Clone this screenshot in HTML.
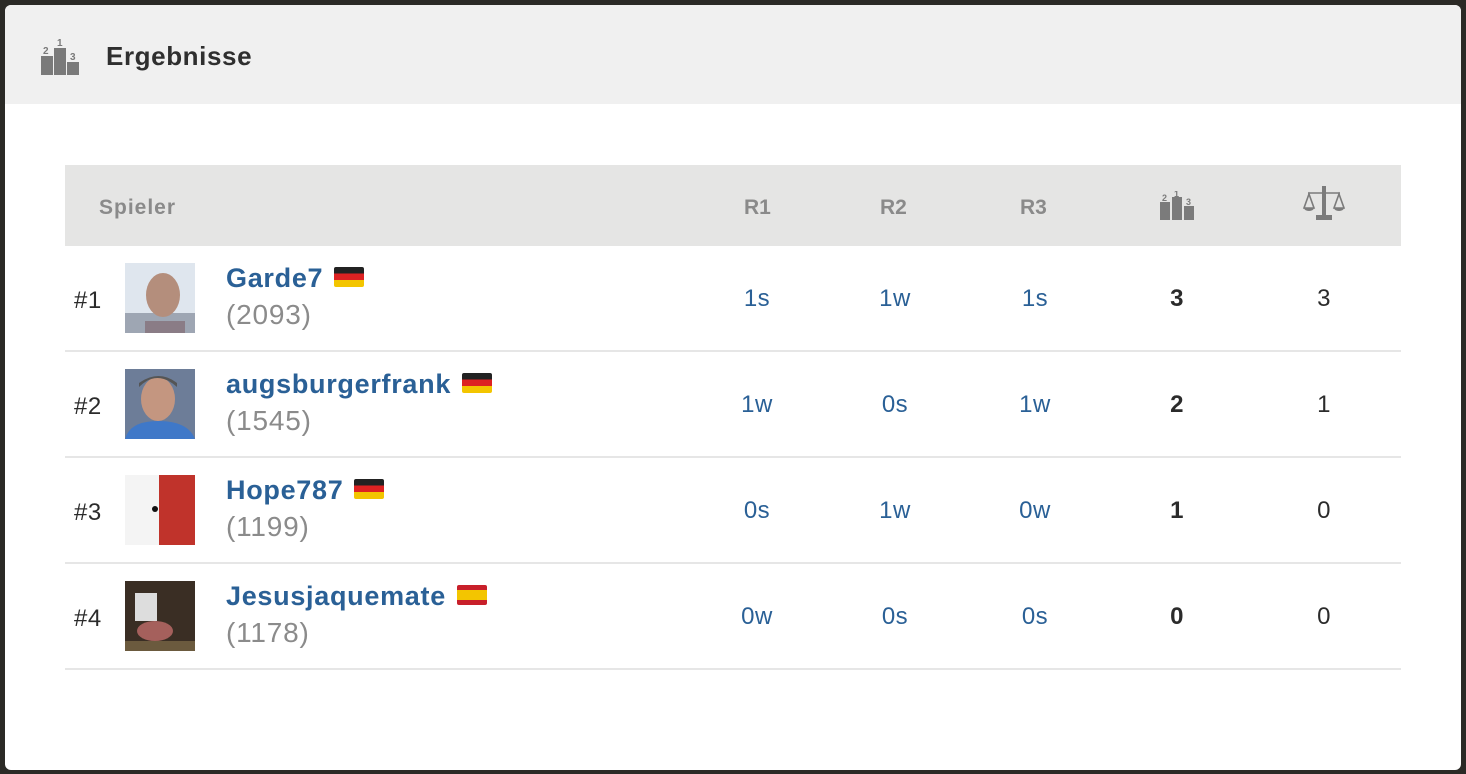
<!DOCTYPE html>
<html><head><meta charset="utf-8"><style>
*{margin:0;padding:0;box-sizing:border-box}
body{width:1466px;height:774px;background:#2b2a26;font-family:"Liberation Sans",sans-serif;overflow:hidden;position:relative}
.card{position:absolute;left:5px;top:5px;width:1456px;height:765px;background:#fff;border-radius:6px;overflow:hidden}
.hdr{height:99px;background:#f0f0f0;position:relative}
.hdr .t{position:absolute;left:101px;top:36px;font-size:26px;color:#2f2f2f;font-weight:bold;letter-spacing:0.6px}
.th{position:absolute;left:60px;top:160px;width:1336px;height:81px;background:#e5e5e4}
.th span{position:absolute;top:31px;font-size:21px;color:#8a8a8a;font-weight:bold}
.row{position:absolute;left:60px;width:1336px;height:106px;border-bottom:2px solid #e6e6e6}
.rk{position:absolute;left:9px;top:41px;font-size:24px;color:#2b2b2b;letter-spacing:0.5px}
.av{position:absolute;left:60px;top:17px;width:70px;height:70px}
.nm{position:absolute;left:161px;top:17px;font-size:27px;font-weight:bold;color:#2a6096;white-space:nowrap;letter-spacing:0.7px}
.fl{display:inline-block;width:30px;height:20px;vertical-align:0px;margin-left:11px;border-radius:2px;overflow:hidden}
.rt{position:absolute;left:161px;top:53px;font-size:28px;color:#8b8b8b;letter-spacing:0.8px}
.c{position:absolute;top:39px;width:100px;margin-left:-50px;text-align:center;font-size:24px;color:#2a6096;letter-spacing:0.5px}
.b{color:#2b2b2b;font-weight:bold}
.n{color:#2b2b2b}
</style></head><body>
<div class="card">
<div class="hdr">
<svg style="position:absolute;left:35px;top:31px" width="40" height="40" viewBox="0 0 40 40"><g fill="#7a7a7a"><rect x="1" y="20" width="12" height="19"/><rect x="14" y="12" width="12" height="27"/><rect x="27" y="26" width="12" height="13"/></g><g fill="#7a7a7a" font-family="Liberation Sans" font-weight="bold" font-size="10"><text x="3" y="18">2</text><text x="17" y="10">1</text><text x="30" y="24">3</text></g></svg>
<div class="t">Ergebnisse</div>
</div>
<div class="th">
<span style="left:34px;letter-spacing:1px">Spieler</span>
<span style="left:679px">R1</span>
<span style="left:815px">R2</span>
<span style="left:955px">R3</span>
<svg style="position:absolute;left:1095px;top:26px" width="34" height="29" viewBox="0 0 34 29"><g fill="#7b7b7b"><rect x="0" y="11" width="10" height="18"/><rect x="12" y="6" width="10" height="23"/><rect x="24" y="15" width="10" height="14"/></g><g fill="#7b7b7b" font-family="Liberation Sans" font-weight="bold" font-size="9"><text x="2" y="10">2</text><text x="14" y="6">1</text><text x="26" y="14">3</text></g></svg>
<svg style="position:absolute;left:1238px;top:21px" width="42" height="36" viewBox="0 0 42 36"><g fill="none" stroke="#7b7b7b" stroke-width="1.6"><path d="M5 7h32"/><path d="M6 8L1 22h10z"/><path d="M36 8l-5 14h10z"/></g><path d="M1 22a5 3 0 0 0 10 0zM31 22a5 3 0 0 0 10 0z" fill="#7b7b7b"/><rect x="19" y="0" width="4" height="30" fill="#7b7b7b"/><rect x="13" y="29" width="16" height="5" fill="#7b7b7b"/></svg>
</div>

<div class="row" style="top:241px">
<div class="rk">#1</div>
<svg class="av" viewBox="0 0 70 70"><rect width="70" height="70" fill="#dfe6ee"/><rect y="50" width="70" height="20" fill="#9ea6b3"/><ellipse cx="38" cy="32" rx="17" ry="22" fill="#b48e7c"/><rect x="20" y="58" width="40" height="12" fill="#8a7c86"/></svg>
<div class="nm">Garde7<span class="fl" style="background:linear-gradient(#222 33%,#dd2222 33%,#dd2222 66%,#f3c500 66%)"></span></div>
<div class="rt">(2093)</div>
<div class="c" style="left:692px">1s</div><div class="c" style="left:830px">1w</div><div class="c" style="left:970px">1s</div>
<div class="c b" style="left:1112px">3</div><div class="c n" style="left:1259px">3</div>
</div>

<div class="row" style="top:347px">
<div class="rk">#2</div>
<svg class="av" viewBox="0 0 70 70"><rect width="70" height="70" fill="#6d7d98"/><ellipse cx="33" cy="30" rx="17" ry="22" fill="#c49680"/><path d="M14 18q18-18 38 0v-4q-18-14-38 0z" fill="#555"/><path d="M0 70q5-18 33-18q30 0 37 18z" fill="#3f78c8"/></svg>
<div class="nm">augsburgerfrank<span class="fl" style="background:linear-gradient(#222 33%,#dd2222 33%,#dd2222 66%,#f3c500 66%)"></span></div>
<div class="rt">(1545)</div>
<div class="c" style="left:692px">1w</div><div class="c" style="left:830px">0s</div><div class="c" style="left:970px">1w</div>
<div class="c b" style="left:1112px">2</div><div class="c n" style="left:1259px">1</div>
</div>

<div class="row" style="top:453px">
<div class="rk">#3</div>
<svg class="av" viewBox="0 0 70 70"><rect width="70" height="70" fill="#f4f4f4"/><rect x="34" width="36" height="70" fill="#c0332b"/><circle cx="30" cy="34" r="3" fill="#111"/></svg>
<div class="nm">Hope787<span class="fl" style="background:linear-gradient(#222 33%,#dd2222 33%,#dd2222 66%,#f3c500 66%)"></span></div>
<div class="rt">(1199)</div>
<div class="c" style="left:692px">0s</div><div class="c" style="left:830px">1w</div><div class="c" style="left:970px">0w</div>
<div class="c b" style="left:1112px">1</div><div class="c n" style="left:1259px">0</div>
</div>

<div class="row" style="top:559px">
<div class="rk">#4</div>
<svg class="av" viewBox="0 0 70 70"><rect width="70" height="70" fill="#3a2e24"/><rect x="10" y="12" width="22" height="28" fill="#ddd"/><ellipse cx="30" cy="50" rx="18" ry="10" fill="#a5605c"/><rect y="60" width="70" height="10" fill="#6b5a3e"/></svg>
<div class="nm">Jesusjaquemate<span class="fl" style="background:linear-gradient(#c8202a 25%,#f3c500 25%,#f3c500 75%,#c8202a 75%)"></span></div>
<div class="rt">(1178)</div>
<div class="c" style="left:692px">0w</div><div class="c" style="left:830px">0s</div><div class="c" style="left:970px">0s</div>
<div class="c b" style="left:1112px">0</div><div class="c n" style="left:1259px">0</div>
</div>
</div>
</body></html>
